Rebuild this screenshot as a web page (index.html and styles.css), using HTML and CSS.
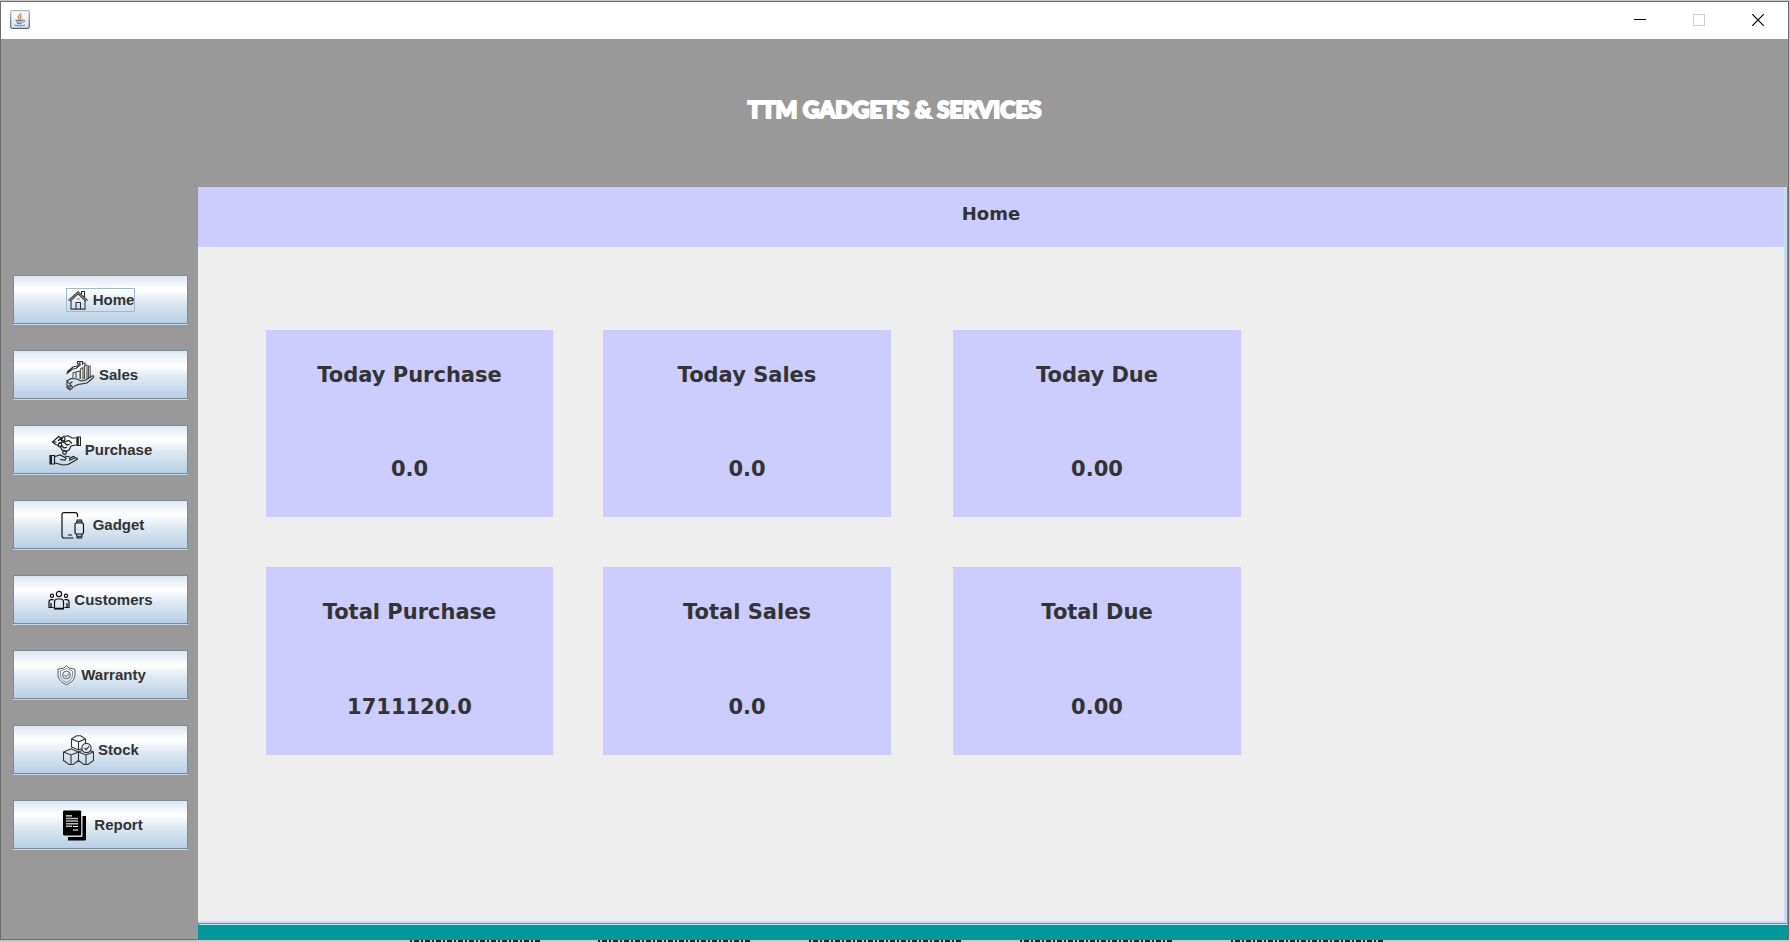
FILE: index.html
```html
<!DOCTYPE html>
<html lang="en">
<head>
<meta charset="utf-8">
<title>TTM Gadgets &amp; Services</title>
<link rel="stylesheet" href="styles.css">
</head>
<body>
<div class="window">
  <header class="titlebar">
    <svg class="app-icon" width="20" height="19" viewBox="0 0 20 19" aria-hidden="true">
      <defs><linearGradient id="tile" x1="0" y1="0" x2="0" y2="1"><stop offset="0" stop-color="#fff"/><stop offset="1" stop-color="#dde1e6"/></linearGradient>
      <linearGradient id="edge" x1="0" y1="0" x2="0" y2="1"><stop offset="0" stop-color="#9fb6cd"/><stop offset="1" stop-color="#4a6a86"/></linearGradient></defs>
      <rect x=".7" y=".7" width="18.6" height="17.6" rx="1.5" fill="url(#tile)" stroke="url(#edge)" stroke-width="1.3"/>
      <path d="M10.8 3c.6 1.500-2.800 2.300-2.600 4 .1.900 1 1.500 1 2.500M12 5.500c-1.500.6-2.200 1.300-1.500 2.200.5.700.2 1.300-.5 1.800" fill="none" stroke="#ee8b3a" stroke-width="1.300"/>
      <path d="M5.500 10.300h7.500M6 12h6.500M7 13.700h4.500" stroke="#5f87a3" stroke-width="1.200"/>
      <path d="M13 10.200c2.600-.6 2 2-.5 2.400M4.500 15c2 1.200 8.500 1.200 10.500-.2" fill="none" stroke="#5f87a3"/>
    </svg>
    <div class="controls">
      <button class="control" aria-label="Minimize"><svg width="12" height="12" viewBox="0 0 12 12"><path d="M0 5.500h12" stroke="#000"/></svg></button>
      <button class="control" aria-label="Maximize" disabled><svg width="12" height="12" viewBox="0 0 12 12"><path d="M.5.500h11v11H.5z" fill="none" stroke="#ccc"/></svg></button>
      <button class="control" aria-label="Close"><svg width="12" height="12" viewBox="0 0 12 12"><path d="M.3.300l11.400 11.400M11.700.3L.3 11.700" stroke="#000" stroke-width="1.200"/></svg></button>
    </div>
  </header>
  <div class="banner"><h1 class="brand">TTM GADGETS &amp; SERVICES</h1></div>
  <div class="body">
    <nav class="sidebar">
      <button class="nav"><span class="nav-content focused">
        <svg width="22" height="22" viewBox="0 0 22 22" fill="none" stroke="#333" stroke-width="1.100"><path d="M1.500 11.500L11 2.700l9.500 8.800M3 12.300l8-7.500 8 7.500M4 11.500V20h14v-8.500M9 20v-6.500h4.500V20M3.500 20.300h15M14.500 5V2.500h3v5.500"/><path d="M10 10h2.500" stroke="#888"/></svg>
        Home</span></button>
      <button class="nav"><span class="nav-content">
        <svg width="32" height="32" viewBox="0 0 32 32" fill="none" stroke="#333" stroke-width="1.100"><path d="M3.500 15l6-5 3.500-.5 4-3.500M4 13l6-5 4-1 2.500-3M14.500 5V2.500h5V6M17 2v5M20 4h2v3"/><path d="M10 19v-5l3-1v6M13 19v-6l4-1v8M17.500 20V10l2.500-1.500V21M21.500 20V7l2.500-1v14M25.500 20V7h1.700v12" stroke="#555"/><path d="M4 22l4-2.500 6 .5 4 2 4-.5 7-4.500c2-.7 2 1 1 2L24 24l-9 1.500-4 2M4 22l6 6.500-3 2.300-3-2zM7 24.500l2.500-2M7 27h1.500"/><circle cx="6" cy="28" r="1.200"/></svg>
        Sales</span></button>
      <button class="nav"><span class="nav-content">
        <svg width="32" height="32" viewBox="0 0 32 32" fill="none" stroke="#222" stroke-width="1.200"><path d="M28 3h3.500v8.500H28z"/><path d="M28.800 3v8.500" stroke-width="2"/><path d="M27 4h-4l-4-2.200-5 .7M27 11l-5 1-2 4-3 1.500-4-1.500-2-4M10.500 2.200L8 4 3.500 8l3 2.500 4 1.500M9 2l3 2-3 3M14 3.500l-2 2 4 2 4-1 3 3M4.500 7.500l3 1M10 9l3-1 3 1 2 2 3-1M12 11l3 3 3-1"/><circle cx="14" cy="5" r="2"/><circle cx="11" cy="11" r="1.800"/><circle cx="15.500" cy="18.500" r="1.800"/><path d="M1 21.500h4.500v8.500H1z"/><path d="M2 22v8" stroke-width="2"/><path d="M6 22.500l5-1.500 6 3-1 2-5-.5M6 29l8 2 5-.5 9-5c1-1-.5-2-2-1.500l-6 2.500M20 25l4-2.500 2 .5M16 22l5 1"/></svg>
        Purchase</span></button>
      <button class="nav"><span class="nav-content">
        <svg width="32" height="32" viewBox="0 0 32 32" fill="none" stroke="#111" stroke-width="1.200"><path d="M20.500 8V6c0-1.500-.7-2.300-2-2.300H7C5.700 3.700 5 4.500 5 5.500v21.300c0 1.400.7 2.200 2 2.200h9.500M11 26h4"/><rect x="18" y="14" width="8.500" height="11" rx="1.500"/><path d="M19.500 14l.8-3h4l.8 3M19.500 25l.8 4h4l.8-4" /><path d="M19.500 12.500h6M19.500 27.500h6" stroke="#444" stroke-width="1.500"/></svg>
        Gadget</span></button>
      <button class="nav"><span class="nav-content">
        <svg width="22" height="22" viewBox="0 0 22 22" fill="none" stroke="#111" stroke-width="1.200"><circle cx="11" cy="5" r="2.600"/><circle cx="4" cy="6.800" r="1.600"/><circle cx="18" cy="6.800" r="1.600"/><path d="M6.500 20v-7c0-2 1.500-3 3-3h3c1.500 0 3 1 3 3v7zM5.500 18.500H1V13c0-1.700 1-2.300 2.500-2.300h2M16.500 18.500H21V13c0-1.700-1-2.300-2.500-2.300h-2"/><path d="M3 18v-4M19 18v-4M7 19.500h8" stroke-width="1.300"/></svg>
        Customers</span></button>
      <button class="nav"><span class="nav-content">
        <svg width="22" height="22" viewBox="0 0 22 22" fill="none" stroke="#555" stroke-width=".9"><path d="M11.500 1.500L9 4 3 5.200v5.300c0 5 3.500 8 8.500 10.300C16.500 18.500 20 15.500 20 10.500V5.200L14 4z"/><path d="M11.500 4.500L5.500 7v4c0 3.500 2.500 5.800 6 7.500 3.500-1.700 6-4 6-7.500V7z" stroke="#888"/><circle cx="11.500" cy="11" r="3.800"/><path d="M9.500 11l1.700 1.800 3-3.500"/></svg>
        Warranty</span></button>
      <button class="nav"><span class="nav-content">
        <svg width="32" height="32" viewBox="0 0 32 32" fill="none" stroke="#333" stroke-width="1.100"><path d="M9.500 5l5-3.200h4l5 3.200v8l-7 3-7-3zM9.500 5l7 2.800 7-2.800M16.500 7.700v8M9 14.800L1.500 18v8.500l5.500 4h4l5.500-4V18zM1.500 18L9 21l7.500-3M9 21v9.500M24 14.800L16.500 18v8.500l5.500 4h4l5.500-4V18zM16.500 18l7.500 3 7.500-3M24 21v9.500"/><circle cx="24.500" cy="14" r="4.600" fill="#e2ebf3"/><path d="M22.500 14l1.700 1.700 3-3.500"/></svg>
        Stock</span></button>
      <button class="nav"><span class="nav-content">
        <svg width="32" height="32" viewBox="0 0 32 32"><path d="M6 1.500h16a1.200 1.200 0 0 1 1.200 1.200V25.300A1.200 1.200 0 0 1 22 26.500H6a1.200 1.200 0 0 1-1-1.200V2.700A1.200 1.200 0 0 1 6 1.500zM24.500 7H28v23a1.500 1.500 0 0 1-1.500 1.500H10V28h13a1.500 1.500 0 0 0 1.500-1.500z" fill="#000"/><path d="M8 6.800h6M15 17.500h5M15 21h5" stroke="#fff" stroke-width="1.200"/><path d="M8 9.500h12M8 12h12M8 14.700h12M8 17.200h6" stroke="#bbb" stroke-width="1.500"/></svg>
        Report</span></button>
    </nav>
    <div class="desk">
      <main class="panel">
        <h2 class="panel-title">Home</h2>
        <div class="cards">
          <section class="card"><h3 class="label">Today Purchase</h3><p class="value">0.0</p></section>
          <section class="card"><h3 class="label">Today Sales</h3><p class="value">0.0</p></section>
          <section class="card card-due"><h3 class="label">Today Due</h3><p class="value">0.00</p></section>
          <section class="card"><h3 class="label">Total Purchase</h3><p class="value">1711120.0</p></section>
          <section class="card"><h3 class="label">Total Sales</h3><p class="value">0.0</p></section>
          <section class="card card-due"><h3 class="label">Total Due</h3><p class="value">0.00</p></section>
        </div>
      </main>
    </div>
  </div>
</div>
<div class="behind"><span class="tab tab-first"></span><span class="tab"></span><span class="tab"></span><span class="tab"></span><span class="tab"></span></div>
</body>
</html>
```
FILE: styles.css
```css
* { box-sizing: border-box; }

body {
  margin: 0;
  min-height: 100vh;
  display: flex;
  flex-direction: column;
  background: #c8c8c8;
  color: #333;
  font-family: "Liberation Sans", Arial, sans-serif;
}

h1, h2, h3, p { margin: 0; }

.window {
  flex: 1;
  display: flex;
  flex-direction: column;
  margin: 1px 1px 0 0;
  border: 1px solid #6c6c6c;
  background: #999;
}

.titlebar {
  display: flex;
  justify-content: space-between;
  height: 37px;
  background: #fff;
}

.app-icon { margin: 8px 0 0 9px; }

.controls {
  display: flex;
  padding-right: 1px;
}

.control {
  display: flex;
  align-items: center;
  justify-content: center;
  width: 59px;
  height: 36px;
  padding: 0;
  border: 0;
  background: none;
}

.banner {
  height: 148px;
  padding-top: 54px;
  text-align: center;
}

.brand {
  color: #fff;
  font: 900 23px/32px Lato, "Open Sans", sans-serif;
  -webkit-text-stroke: 2px #fff;
}

.body {
  flex: 1;
  display: flex;
}

.sidebar {
  width: 197px;
  padding: 88px 10px 0 12px;
  display: flex;
  flex-direction: column;
  gap: 26px;
}

.nav {
  display: flex;
  align-items: center;
  justify-content: center;
  height: 49px;
  padding: 0;
  border: 1px solid #7a8a99;
  border-radius: 0;
  background: linear-gradient(#dde8f3, #fff 30%, #dfe9f3 55%, #b8cfe5);
  box-shadow: 0 1px #c4d8ea;
  color: #333;
  font: bold 15px/18px "Liberation Sans", Arial, sans-serif;
}

.nav-content {
  display: flex;
  align-items: center;
  gap: 4px;
}

.focused { outline: 1px solid #a3b8cc; }

.desk {
  flex: 1;
  display: flex;
  padding-bottom: 14px;
  background: #009999;
}

.panel {
  flex: 1;
  border: solid #c8ddf2;
  border-width: 0 3px 2px 0;
  margin: 0 1px 2px 0;
  background: #eee;
  box-shadow: 1px 1px #7a8a99, 1px 2px #c8ddf2;
}

.panel-title {
  height: 60px;
  padding-top: 16px;
  background: #ccccff;
  text-align: center;
  font: bold 18px/22px "DejaVu Sans", Verdana, sans-serif;
}

.cards {
  display: grid;
  grid-template-columns: 287px 288px 288px;
  grid-template-rows: 187px 188px;
  gap: 50px;
  padding: 83px 0 0 68px;
}

.card {
  padding: 31px 0 34px;
  display: flex;
  flex-direction: column;
  justify-content: space-between;
  background: #ccccff;
  text-align: center;
  font: bold 21px/28px "DejaVu Sans", Verdana, sans-serif;
}

.card-due { margin: 0 -12px 0 12px; }

.label { font: inherit; }

.behind {
  display: flex;
  gap: 57px;
  height: 2px;
  padding-left: 410px;
}

.tab {
  width: 154px;
  background: repeating-linear-gradient(90deg, #222 0 2px, #c8c8c8 2px 4px, #222 4px 9px, #c8c8c8 9px 11px);
}

.tab-first { width: 131px; }
```
